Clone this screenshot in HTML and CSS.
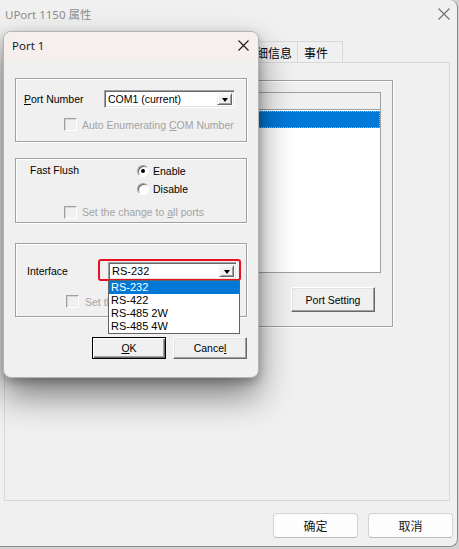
FILE: index.html
```html
<!DOCTYPE html>
<html lang="zh-CN">
<head>
<meta charset="utf-8">
<title>UPort 1150 属性</title>
<link rel="stylesheet" href="styles.css">
</head>
<body>
<div class="window">
  <div class="titlebar">
    <span class="wtitle">UPort 1150 属性</span>
    <svg class="wclose" width="12" height="12" viewBox="0 0 12 12"><path d="M0.5 0.5L11.5 11.5M11.5 0.5L0.5 11.5" stroke="#6f6f6f" stroke-width="1.1" fill="none"/></svg>
  </div>
  <div class="tabs">
    <div class="tab tab-detail">详细信息</div>
    <div class="tab tab-event">事件</div>
  </div>
  <div class="panel">
    <div class="pgroup">
      <div class="listview">
        <div class="lv-head"></div>
        <div class="lv-row lv-sel"></div>
      </div>
      <button class="btn3d portset">Port Setting</button>
    </div>
  </div>
  <div class="footer">
    <button class="wbtn">确定</button>
    <button class="wbtn">取消</button>
  </div>

  <div class="dialog">
    <div class="dlg-title">
      <span class="dtitle">Port 1</span>
      <svg class="dclose" width="11" height="11" viewBox="0 0 11 11"><path d="M0.5 0.5L10.5 10.5M10.5 0.5L0.5 10.5" stroke="#1b1b1b" stroke-width="1.1" fill="none"/></svg>
    </div>
    <div class="dlg-body">
      <div class="group g1">
        <div class="row">
          <span class="lbl lbl-port"><u>P</u>ort Number</span>
          <div class="combo combo-port">
            <span class="cval">COM1 (current)</span>
            <span class="ddbtn"><i class="arrow"></i></span>
          </div>
        </div>
        <div class="chkrow chk1">
          <span class="chk"></span>
          <span class="dis">Auto Enumerating <u>C</u>OM Number</span>
        </div>
      </div>

      <div class="group g2">
        <span class="lbl lbl-ff">Fast Flush</span>
        <div class="radios">
          <div class="radrow"><span class="radio on"></span><span>Enable</span></div>
          <div class="radrow"><span class="radio"></span><span>Disable</span></div>
        </div>
        <div class="chkrow chk2">
          <span class="chk"></span>
          <span class="dis">Set the change to <u>a</u>ll ports</span>
        </div>
      </div>

      <div class="group g3">
        <div class="row">
          <span class="lbl lbl-if">Interface</span>
          <div class="combo combo-if">
            <span class="cval">RS-232</span>
            <span class="ddbtn"><i class="arrow"></i></span>
            <div class="droplist">
              <div class="ditem sel">RS-232</div>
              <div class="ditem">RS-422</div>
              <div class="ditem">RS-485 2W</div>
              <div class="ditem">RS-485 4W</div>
            </div>
          </div>
        </div>
        <div class="chkrow chk3">
          <span class="chk"></span>
          <span class="dis">Set the change to <u>a</u>ll ports</span>
        </div>
      </div>

      <div class="dlg-btns">
        <button class="btn3d default"><u>O</u>K</button>
        <button class="btn3d">Cance<u>l</u></button>
      </div>
    </div>
  </div>
</div>
</body>
</html>
```

FILE: styles.css
```css
* { box-sizing: border-box; }
html, body { margin: 0; padding: 0; }
body {
  width: 459px;
  height: 549px;
  overflow: hidden;
  background: #d2d2d2;
  font-family: "Liberation Sans", Arial, sans-serif;
  font-size: 10.5px;
  color: #000;
}
button { font: inherit; color: inherit; padding: 0; margin: 0; }
u { text-decoration: underline; text-underline-offset: 1px; }

.window {
  position: relative;
  width: 458px;
  height: 547px;
  background: #f0f0f0;
  border-right: 1px solid #8c8c8c;
  border-bottom: 1px solid #8c8c8c;
  border-radius: 0 8px 8px 0;
  display: flex;
  flex-direction: column;
}

.titlebar {
  height: 30px;
  display: flex;
  align-items: center;
  justify-content: space-between;
  padding: 0 7px 2px 5px;
}
.wtitle {
  font-family: "Noto Sans", "Noto Sans CJK SC", sans-serif;
  font-size: 11.5px;
  color: #8d8d8d;
}

.tabs {
  display: flex;
  margin-top: 11px;
  height: 21px;
  padding-left: 237px;
}
.tab {
  font-family: "Noto Sans CJK SC", sans-serif;
  font-size: 12px;
  height: 21px;
  border: 1px solid #d9d9d9;
  border-bottom: none;
  background: #f0f0f0;
  display: flex;
  align-items: center;
  padding: 0 6px;
  white-space: nowrap;
  overflow: hidden;
}
.tab-detail { width: 61px; }
.tab-event { width: 46px; margin-left: -1px; }

.panel {
  margin: 0 7px 0 4px;
  height: 439px;
  border: 1px solid #d9d9d9;
  background: #f0f0f0;
  padding: 17px 56px 0 10px;
}
.pgroup {
  height: 247px;
  border: 1px solid #a0a0a0;
  box-shadow: inset 1px 1px 0 #fff, 1px 1px 0 #fff;
  padding: 11px 11px 0 11px;
  display: flex;
  flex-direction: column;
}
.listview {
  height: 181px;
  border: 1px solid #a0a0a0;
  background: #fff;
}
.lv-head {
  height: 17px;
  background: #f0f0f0;
  border-bottom: 1px solid #a0a0a0;
}
.lv-row { height: 17px; margin-top: 1px; }
.lv-sel {
  background: #0078d7;
  outline: 1px dotted #f0a040;
  outline-offset: -1px;
}
.portset {
  align-self: flex-end;
  width: 84px;
  height: 25px;
  margin-top: 14px;
  margin-right: 6px;
}

.footer {
  display: flex;
  justify-content: flex-end;
  gap: 10px;
  margin-top: 12px;
  padding-right: 4px;
}
.wbtn {
  width: 85px;
  height: 25px;
  border: 1px solid #d3d3d3;
  border-bottom-color: #bcbcbc;
  border-radius: 4px;
  background: #fdfdfd;
  font-family: "Noto Sans CJK SC", sans-serif;
  font-size: 12px;
  color: #1a1a1a;
}

/* classic 3D button */
.btn3d {
  background: #f0f0f0;
  border: 1px solid;
  border-color: #fff #696969 #696969 #fff;
  box-shadow: inset -1px -1px 0 #a0a0a0, inset 1px 1px 0 #e3e3e3;
  font-family: "Liberation Sans", Arial, sans-serif;
  font-size: 10.5px;
}
.btn3d.default {
  border: 1px solid #000;
  box-shadow: inset 1px 1px 0 #fff, inset -1px -1px 0 #696969, inset -2px -2px 0 #a0a0a0;
}

/* dialog */
.dialog {
  position: absolute;
  left: 3px;
  top: 31px;
  width: 256px;
  height: 347px;
  border: 1px solid #b4b4b4;
  border-radius: 8px;
  background: #f0f0f0;
  box-shadow: 0 18px 34px rgba(0, 0, 0, 0.48), 0 4px 10px rgba(0, 0, 0, 0.25);
  z-index: 5;
}
.dlg-title {
  height: 29px;
  background: #f6efed;
  border-radius: 7px 7px 0 0;
  display: flex;
  align-items: center;
  justify-content: space-between;
  padding: 0 9px 2px 8px;
}
.dtitle {
  font-family: "Noto Sans", sans-serif;
  font-size: 11.5px;
  color: #1a1a1a;
}
.dlg-body { padding: 17px 11px 0; }

.group {
  border: 1px solid #a0a0a0;
  box-shadow: inset 1px 1px 0 #fff, 1px 1px 0 #fff;
}
.g1 { height: 64px; padding: 11px 0 0 8px; }
.row { display: flex; align-items: center; height: 18px; }
.lbl { white-space: nowrap; }
.lbl-port { width: 80px; }
.chkrow { display: flex; align-items: center; height: 13px; white-space: nowrap; }
.chk1 { margin-top: 10px; padding-left: 40px; gap: 5px; }
.chk {
  flex: none;
  width: 13px;
  height: 13px;
  background: #f0f0f0;
  border: 1px solid;
  border-color: #a0a0a0 #fff #fff #a0a0a0;
  box-shadow: inset 1px 1px 0 #d6d6d6;
}
.dis { color: #a3a3a3; }

.combo {
  position: relative;
  height: 18px;
  display: flex;
  align-items: stretch;
  background: #fff;
  border: 1px solid;
  border-color: #a0a0a0 #fff #fff #a0a0a0;
  box-shadow: inset 1px 1px 0 #696969, inset -1px -1px 0 #e3e3e3;
  padding: 2px 2px 2px 3px;
}
.combo-port { width: 131px; }
.cval { flex: 1; display: flex; align-items: center; white-space: nowrap; }
.ddbtn {
  flex: none;
  width: 15px;
  background: #f0f0f0;
  border: 1px solid;
  border-color: #f0f0f0 #696969 #696969 #f0f0f0;
  box-shadow: inset 1px 1px 0 #fff, inset -1px -1px 0 #a0a0a0;
  display: flex;
  align-items: center;
  justify-content: center;
}
.arrow {
  width: 0;
  height: 0;
  border-left: 3.5px solid transparent;
  border-right: 3.5px solid transparent;
  border-top: 4px solid #000;
  margin-top: 1px;
}

.g2 {
  height: 65px;
  margin-top: 16px;
  padding-top: 3px;
  display: grid;
  grid-template-columns: 121px 1fr;
  grid-auto-rows: auto;
}
.lbl-ff { padding-left: 14px; height: 18px; line-height: 16px; }
.radios { display: flex; flex-direction: column; }
.radrow { display: flex; align-items: center; gap: 4px; height: 18px; }
.radio {
  position: relative;
  width: 12px;
  height: 12px;
  border-radius: 50%;
  background: #fff;
  border: 1px solid;
  border-color: #a0a0a0 #fff #fff #a0a0a0;
  box-shadow: inset 1px 1px 0 #696969;
}
.radio.on::after {
  content: "";
  position: absolute;
  left: 3px;
  top: 3px;
  width: 4px;
  height: 4px;
  border-radius: 50%;
  background: #000;
}
.chk2 { grid-column: 1 / -1; margin-top: 4px; padding-left: 48px; gap: 5px; }

.g3 { height: 74px; margin-top: 20px; padding: 18px 0 0 11px; }
.lbl-if { width: 81px; }
.combo-if { width: 129px; font-size: 11px; z-index: 2; }
.combo-if::after {
  content: "";
  position: absolute;
  left: -11px;
  top: -4px;
  right: -5px;
  bottom: -2px;
  border: 2px solid #e81123;
  border-radius: 3px;
  pointer-events: none;
}
.droplist {
  position: absolute;
  left: -1px;
  top: 100%;
  margin-top: 1px;
  width: 132px;
  border: 1px solid #646464;
  background: #fff;
  z-index: 3;
}
.ditem {
  height: 13px;
  line-height: 13px;
  padding-left: 2px;
  font-size: 11px;
  white-space: nowrap;
}
.ditem.sel { background: #0078d7; color: #fff; }
.chk3 { margin-top: 15px; padding-left: 39px; gap: 6px; }

.dlg-btns {
  display: flex;
  justify-content: flex-end;
  gap: 7px;
  margin-top: 20px;
}
.dlg-btns .btn3d { width: 74px; height: 22px; }
```
